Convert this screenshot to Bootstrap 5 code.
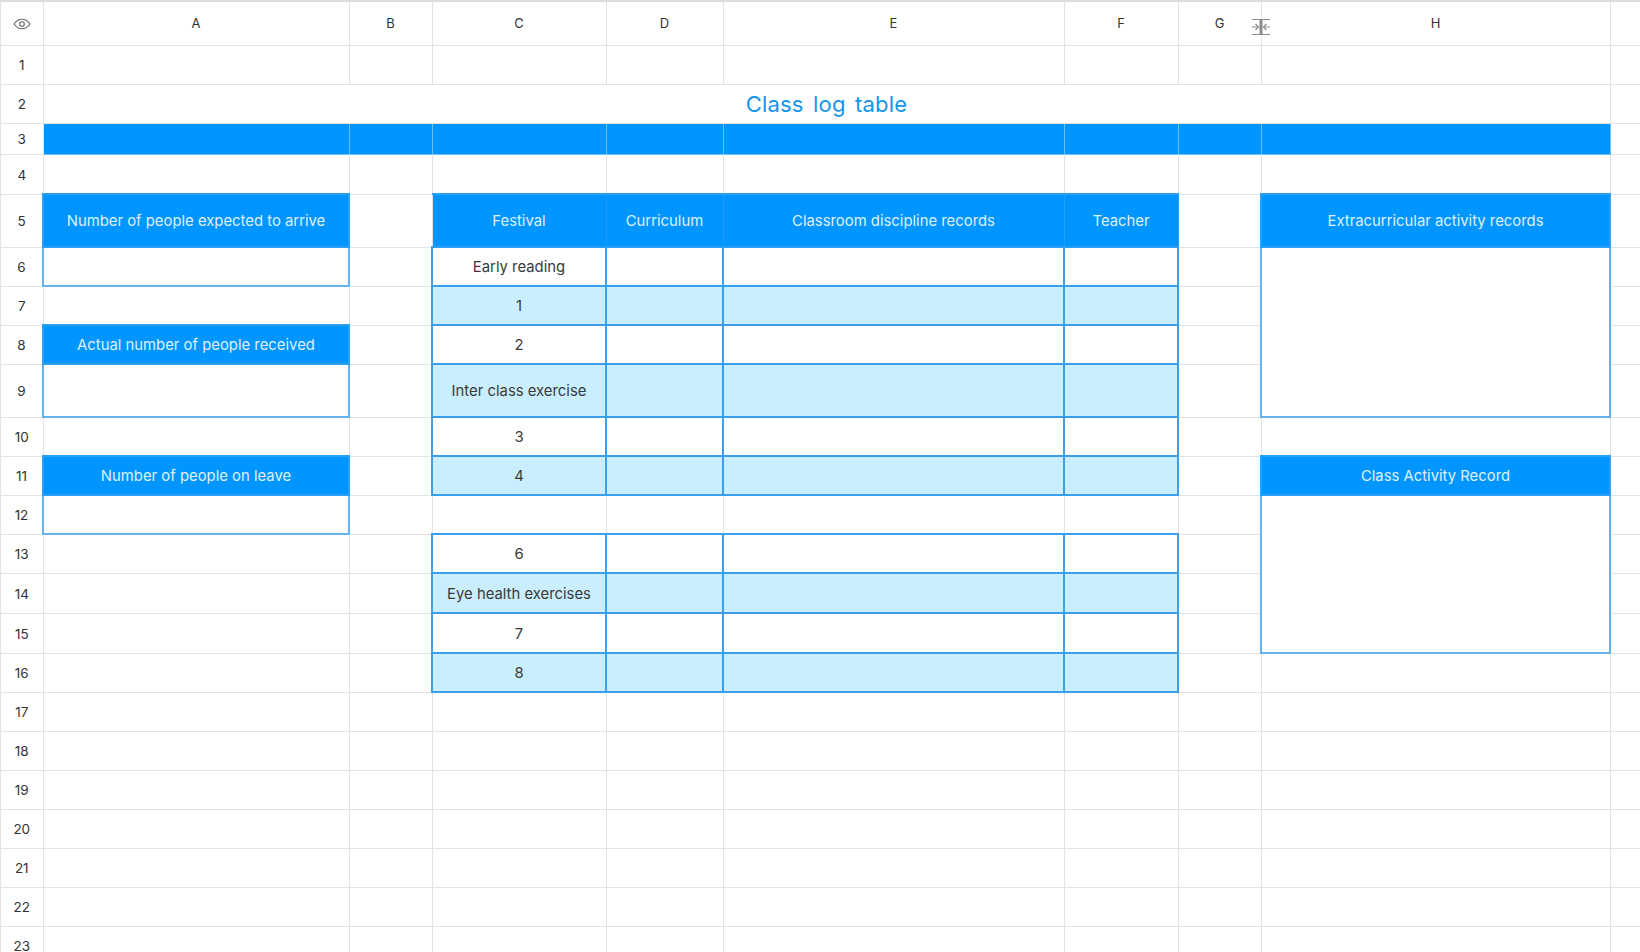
<!DOCTYPE html>
<html lang="en">
<head>
    <meta charset="UTF-8">
    <meta name="viewport" content="width=device-width, initial-scale=1.0">
    <title>Class log table</title>
    <link href="https://cdn.jsdelivr.net/npm/bootstrap@5.3.0/dist/css/bootstrap.min.css" rel="stylesheet">
    <style>
        html, body {
            height: 952px;
            overflow: hidden;
            background-color: #fff;
        }
        .sheet {
            width: 1640px;
            table-layout: fixed;
            border-collapse: collapse;
            font-family: Inter, "Liberation Sans", sans-serif;
            font-size: 14.85px;
            color: #3a3a3a;
            border-top: 2px solid #dcdcdc;
        }
        .sheet th, .sheet td {
            padding: 2px 0 0;
            border: 1px solid #e2e2e2;
            text-align: center;
            vertical-align: middle;
            font-weight: 400;
            overflow: hidden;
            white-space: nowrap;
        }
        .sheet thead th { padding: 0; font-size: 13px; color: #333; position: relative; overflow: visible; }
        .sheet tbody th { font-size: 13.5px; color: #333; }
        .col-rownum { width: 42.5px; }
        .col-a { width: 306px; }
        .col-b { width: 83px; }
        .col-c { width: 174px; }
        .col-d { width: 117px; }
        .col-e { width: 341px; }
        .col-f { width: 114px; }
        .col-g { width: 83px; }
        .col-h { width: 349px; }
        .col-end { width: 30.5px; }
        .rh-44 { height: 44px; }
        .rh-39 { height: 39px; }
        .rh-40 { height: 40px; }
        .rh-31 { height: 31px; }
        .rh-53 { height: 53px; }
        .sheet td.sheet-title {
            font-size: 22px;
            word-spacing: 3px;
            letter-spacing: .2px;
            color: #1495ea;
            border-left-color: #fff;
        }
        .sheet td.band { background-color: #0095ff; border-color: #6fc0f9; }
        .sheet td.head {
            background-color: #0095ff;
            color: #dff1ff;
            border: 2px solid #2b9ff2;
        }
        .sheet td.head-inner { border-left: 1px solid #1a9dfb; border-right: 1px solid #1a9dfb; }
        .sheet td.box { border: 2px solid #3a9fec; }
        .sheet td.side { border: 2px solid #62b3ec; }
        .sheet td.tint { background-color: #c9eeff; }
        .resize-mark {
            position: absolute;
            left: -11px;
            top: 16px;
            width: 20px;
            height: 18px;
        }
    </style>
</head>
<body>
    <table class="table mb-0 sheet">
        <colgroup>
            <col class="col-rownum"><col class="col-a"><col class="col-b"><col class="col-c"><col class="col-d">
            <col class="col-e"><col class="col-f"><col class="col-g"><col class="col-h"><col class="col-end">
        </colgroup>
        <thead>
            <tr class="rh-44">
                <th>
                    <svg width="18" height="12" viewBox="0 0 18 12" fill="none" stroke="#666" stroke-width="1.1">
                        <path d="M1 6C3.2 2.8 5.8 1.2 9 1.2S14.8 2.8 17 6C14.8 9.2 12.2 10.8 9 10.8S3.2 9.2 1 6Z"/>
                        <circle cx="9" cy="6" r="2.3"/>
                    </svg>
                </th>
                <th>A</th><th>B</th><th>C</th><th>D</th><th>E</th><th>F</th>
                <th>G</th>
                <th>
                    H
                    <svg class="resize-mark" viewBox="0 0 20 18" fill="none" stroke="#8b8b8b" stroke-width="1.2">
                        <path d="M1 1.5H19M1 16.5H19"/>
                        <path d="M10 1.5V16.5" stroke-width="3"/>
                        <path d="M1 9H7M13 9H19"/>
                        <path d="M4.5 6 7.5 9 4.5 12M15.5 6 12.5 9 15.5 12"/>
                    </svg>
                </th>
                <th></th>
            </tr>
        </thead>
        <tbody>
            <tr class="rh-39"><th>1</th><td></td><td></td><td></td><td></td><td></td><td></td><td></td><td></td><td></td></tr>
            <tr class="rh-39"><th>2</th><td colspan="8" class="sheet-title">Class log table</td><td></td></tr>
            <tr class="rh-31"><th>3</th><td class="band"></td><td class="band"></td><td class="band"></td><td class="band"></td><td class="band"></td><td class="band"></td><td class="band"></td><td class="band"></td><td></td></tr>
            <tr class="rh-40"><th>4</th><td></td><td></td><td></td><td></td><td></td><td></td><td></td><td></td><td></td></tr>
            <tr class="rh-53"><th>5</th>
                <td class="head">Number of people expected to arrive</td><td></td>
                <td class="head head-inner">Festival</td><td class="head head-inner">Curriculum</td><td class="head head-inner">Classroom discipline records</td><td class="head head-inner">Teacher</td><td></td>
                <td class="head">Extracurricular activity records</td><td></td></tr>
            <tr class="rh-39"><th>6</th>
                <td class="side"></td><td></td>
                <td class="box">Early reading</td><td class="box"></td><td class="box"></td><td class="box"></td><td></td>
                <td class="side" rowspan="4"></td><td></td></tr>
            <tr class="rh-39"><th>7</th>
                <td></td><td></td>
                <td class="box tint">1</td><td class="box tint"></td><td class="box tint"></td><td class="box tint"></td><td></td><td></td></tr>
            <tr class="rh-39"><th>8</th>
                <td class="head">Actual number of people received</td><td></td>
                <td class="box">2</td><td class="box"></td><td class="box"></td><td class="box"></td><td></td><td></td></tr>
            <tr class="rh-53"><th>9</th>
                <td class="side"></td><td></td>
                <td class="box tint">Inter class exercise</td><td class="box tint"></td><td class="box tint"></td><td class="box tint"></td><td></td><td></td></tr>
            <tr class="rh-39"><th>10</th>
                <td></td><td></td>
                <td class="box">3</td><td class="box"></td><td class="box"></td><td class="box"></td><td></td><td></td><td></td></tr>
            <tr class="rh-39"><th>11</th>
                <td class="head">Number of people on leave</td><td></td>
                <td class="box tint">4</td><td class="box tint"></td><td class="box tint"></td><td class="box tint"></td><td></td>
                <td class="head">Class Activity Record</td><td></td></tr>
            <tr class="rh-39"><th>12</th>
                <td class="side"></td><td></td>
                <td></td><td></td><td></td><td></td><td></td>
                <td class="side" rowspan="4"></td><td></td></tr>
            <tr class="rh-39"><th>13</th>
                <td></td><td></td>
                <td class="box">6</td><td class="box"></td><td class="box"></td><td class="box"></td><td></td><td></td></tr>
            <tr class="rh-40"><th>14</th>
                <td></td><td></td>
                <td class="box tint">Eye health exercises</td><td class="box tint"></td><td class="box tint"></td><td class="box tint"></td><td></td><td></td></tr>
            <tr class="rh-40"><th>15</th>
                <td></td><td></td>
                <td class="box">7</td><td class="box"></td><td class="box"></td><td class="box"></td><td></td><td></td></tr>
            <tr class="rh-39"><th>16</th>
                <td></td><td></td>
                <td class="box tint">8</td><td class="box tint"></td><td class="box tint"></td><td class="box tint"></td><td></td><td></td><td></td></tr>
            <tr class="rh-39"><th>17</th><td></td><td></td><td></td><td></td><td></td><td></td><td></td><td></td><td></td></tr>
            <tr class="rh-39"><th>18</th><td></td><td></td><td></td><td></td><td></td><td></td><td></td><td></td><td></td></tr>
            <tr class="rh-39"><th>19</th><td></td><td></td><td></td><td></td><td></td><td></td><td></td><td></td><td></td></tr>
            <tr class="rh-39"><th>20</th><td></td><td></td><td></td><td></td><td></td><td></td><td></td><td></td><td></td></tr>
            <tr class="rh-39"><th>21</th><td></td><td></td><td></td><td></td><td></td><td></td><td></td><td></td><td></td></tr>
            <tr class="rh-39"><th>22</th><td></td><td></td><td></td><td></td><td></td><td></td><td></td><td></td><td></td></tr>
            <tr class="rh-39"><th>23</th><td></td><td></td><td></td><td></td><td></td><td></td><td></td><td></td><td></td></tr>
        </tbody>
    </table>

    <script src="https://cdn.jsdelivr.net/npm/bootstrap@5.3.0/dist/js/bootstrap.bundle.min.js"></script>
</body>
</html>
